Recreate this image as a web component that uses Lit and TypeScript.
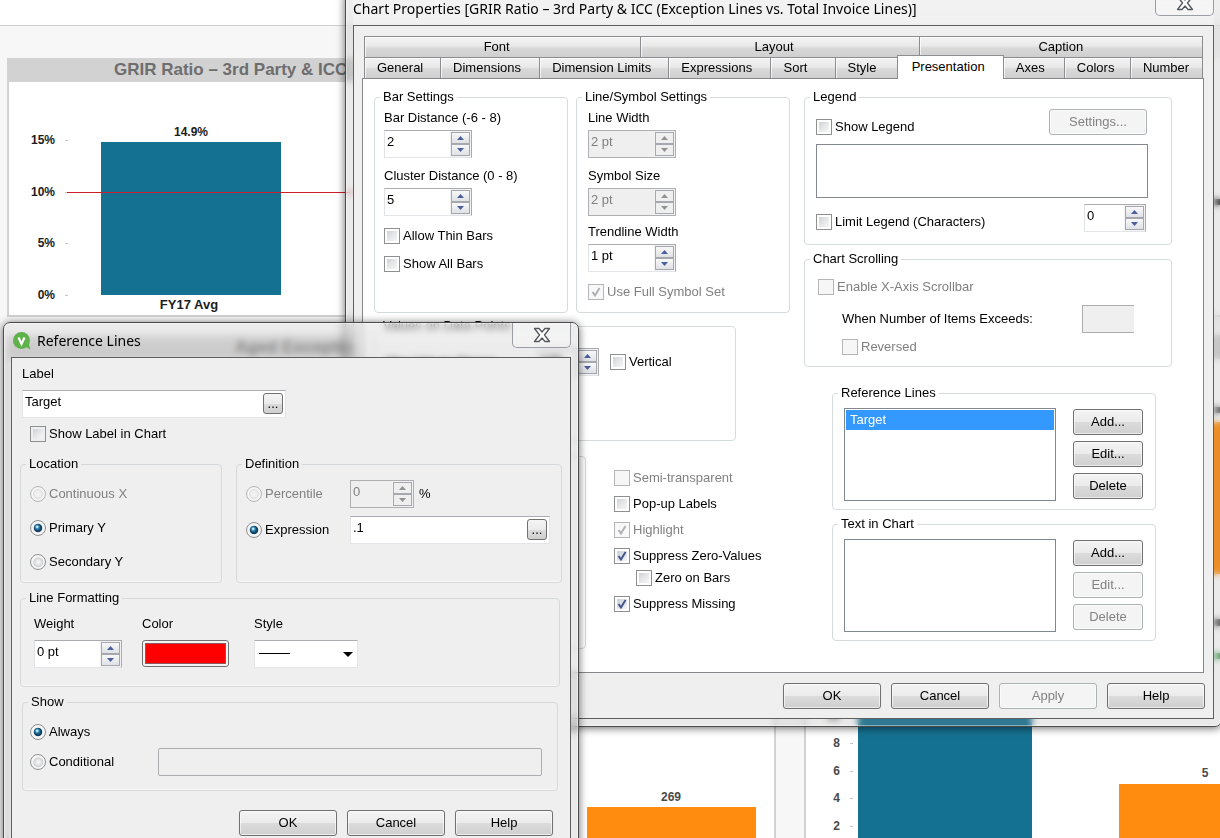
import { LitElement, html, svg, css, nothing } from "lit";
import { customElement, state } from "lit/decorators.js";
import { classMap } from "lit/directives/class-map.js";

interface CheckOptions {
  checked?: boolean;
  disabled?: boolean;
}

const TABS_TOP = ["Font", "Layout", "Caption"];
const TABS = [
  "General",
  "Dimensions",
  "Dimension Limits",
  "Expressions",
  "Sort",
  "Style",
  "Presentation",
  "Axes",
  "Colors",
  "Number",
];

const check = (text: string, o: CheckOptions = {}) => html`
  <label class=${classMap({ option: true, off: !!o.disabled })}>
    <input type="checkbox" .checked=${!!o.checked} ?disabled=${!!o.disabled} />${text}
  </label>
`;

const radio = (group: string, text: string, o: CheckOptions = {}) => html`
  <label class=${classMap({ option: true, off: !!o.disabled })}>
    <input type="radio" name=${group} .checked=${!!o.checked} ?disabled=${!!o.disabled} />${text}
  </label>
`;

const arrow = (up: boolean) => html`
  <svg width="7" height="4" viewBox="0 0 7 4" aria-hidden="true">
    <path d=${up ? "M3.5 0 7 4H0Z" : "M0 0H7L3.5 4Z"} fill="currentColor" />
  </svg>
`;

const spinner = (id: string, value: string, name: string, small = false, disabled = false) => html`
  <span class=${classMap({ spinner: true, small, off: disabled })}>
    <input type="text" id=${id} .value=${value} aria-label=${name} ?disabled=${disabled} />
    <span class="steps">
      <button type="button" aria-label="Increase" ?disabled=${disabled}>${arrow(true)}</button>
      <button type="button" aria-label="Decrease" ?disabled=${disabled}>${arrow(false)}</button>
    </span>
  </span>
`;

const push = (text: string, disabled = false) => html`
  <button type="button" class="push" ?disabled=${disabled}>${text}</button>
`;

const closeButton = () => html`
  <button type="button" class="close" aria-label="Close">
    <svg width="18" height="16" viewBox="0 0 18 16" aria-hidden="true">
      <path
        d="M1.5 1.5H6L9 5 12 1.5H16.500L11.500 8 16.500 14.500H12L9 11 6 14.500H1.500L6.500 8Z"
        fill="#fdfdfd"
        stroke="#55585e"
        stroke-width="1.300"
        stroke-linejoin="round"
      />
    </svg>
  </button>
`;

@customElement("dash-board")
export class DashBoard extends LitElement {
  static styles = css`
    :host {
      display: grid;
      grid-template-rows: 26px 1fr;
      height: 100%;
      background: #f7f7f7;
      font-family: "Liberation Sans", Arial, sans-serif;
    }
    .top {
      background: #fff;
      border-bottom: 1px solid #cfcfcf;
    }
    .cards {
      display: grid;
      grid-template-columns: 769px minmax(0, 1fr);
      grid-template-rows: 259px minmax(0, 1fr);
      gap: 18px 28px;
      padding: 32px 0 0 7px;
      min-height: 0;
    }
    .card {
      display: flex;
      flex-direction: column;
      background: #fff;
      border: 2px solid #d2d2d2;
      border-top: 0;
      overflow: hidden;
    }
    .card:nth-child(even) {
      border-right: 0;
    }
    .card:nth-child(n + 3) {
      border-bottom: 0;
    }
    h2 {
      flex: none;
      margin: 0;
      height: 24px;
      padding-left: 105px;
      background: #d2d2d2;
      color: #6e6e6e;
      font-size: 17px;
      line-height: 23px;
      white-space: nowrap;
    }
    h2.inset {
      padding-left: 226px;
    }
    svg {
      flex: 1;
      width: 100%;
      min-height: 0;
      font-size: 12px;
      font-weight: bold;
      fill: #1c1c1c;
    }
    .lower {
      fill: #4a4a4a;
    }
    .name {
      font-size: 13px;
    }
    .end {
      text-anchor: end;
    }
    .mid {
      text-anchor: middle;
    }
    .blue {
      fill: #157191;
    }
    .orange {
      fill: #ff8c0e;
    }
    .green {
      fill: #4aa05a;
    }
    .target {
      fill: #cc1f2b;
    }
    .tick {
      fill: #c4c4c4;
    }
  `;

  private axis(ticks: [string, number][], right: number) {
    return ticks.map(
      ([text, y]) => svg`
        <text class="end" x=${right} y=${y + 4}>${text}</text>
        <rect class="tick" x=${right + 10} y=${y} width="3" height="1" />`,
    );
  }

  render() {
    return html`
      <div class="top"></div>
      <div class="cards">
        <section class="card">
          <h2>GRIR Ratio – 3rd Party &amp; ICC</h2>
          <svg role="img" aria-label="GRIR ratio chart">
            ${this.axis([["15%", 58], ["10%", 110], ["5%", 161], ["0%", 213]], 46)}
            <rect class="blue" x="92" y="60" width="180" height="153" />
            <rect class="target" x="58" y="110" width="700" height="1" />
            <text class="mid" x="182" y="54">14.9%</text>
            <text class="mid name" x="180" y="227">FY17 Avg</text>
          </svg>
        </section>
        <section class="card">
          <svg aria-hidden="true">
            <rect x="407" y="141" width="9" height="6" />
          </svg>
        </section>
        <section class="card">
          <h2 class="inset">Aged Exceptions</h2>
          <svg class="lower" role="img" aria-label="Aged exceptions chart">
            <rect class="orange" x="578" y="448" width="169" height="100" />
            <text class="mid" x="662" y="442">269</text>
          </svg>
        </section>
        <section class="card">
          <h2></h2>
          <svg class="lower" role="img" aria-label="Exceptions by count">
            ${this.axis([["10", 357], ["8", 384], ["6", 412], ["4", 439], ["2", 467]], 34)}
            <rect class="blue" x="52" y="300" width="174" height="300" />
            <rect class="orange" x="313" y="425" width="180" height="200" />
            <rect class="orange" x="360" y="63" width="90" height="152" />
            <rect x="407" y="48" width="9" height="6" />
            <rect x="407" y="260" width="9" height="7" />
            <rect class="green" x="407" y="294" width="9" height="6" />
            <text class="mid" x="399" y="418">5</text>
          </svg>
        </section>
      </div>
    `;
  }
}

@customElement("app-root")
export class AppRoot extends LitElement {
  @state() private tab = "Presentation";

  static styles = css`
    :host {
      display: block;
      position: relative;
      height: 100vh;
      overflow: hidden;
      background: #fff;
      color: #000;
      font: 13px/16px "Liberation Sans", Arial, sans-serif;
    }
    * {
      box-sizing: border-box;
    }
    input,
    button,
    select {
      font: inherit;
      color: inherit;
      margin: 0;
    }
    input[type="text"] {
      display: block;
      min-width: 0;
      outline: 0;
    }

    /* Windows */
    .window {
      position: absolute;
      padding: 0 7px 7px;
      border: 1px solid #4c4c4c;
      border-radius: 7px;
      background: linear-gradient(rgba(225, 225, 225, 0.5), rgba(150, 150, 150, 0.2) 40px);
      backdrop-filter: blur(3px);
      box-shadow:
        inset 0 0 0 1px rgba(255, 255, 255, 0.4),
        0 1px 9px rgba(0, 0, 0, 0.6);
    }
    .properties {
      top: -10px;
      left: 345px;
      right: -2px;
    }
    .properties .bar {
      background: rgba(245, 245, 245, 0.6);
    }
    .reference {
      top: 322px;
      left: 3px;
      width: 576px;
    }
    .bar {
      display: flex;
      align-items: flex-start;
      height: 34px;
    }
    .bar h1 {
      flex: 1;
      margin: 0;
      padding-top: 9px;
      font: 14px/18px "Noto Sans", "Open Sans", sans-serif;
      white-space: nowrap;
    }
    .logo {
      margin: 9px 6px 0 2px;
    }
    .close {
      display: grid;
      place-items: center;
      width: 59px;
      height: 25px;
      padding: 0;
      border: 1px solid #9a9da3;
      border-top: 0;
      border-radius: 0 0 5px 5px;
      background: rgba(250, 250, 250, 0.4);
    }
    .client {
      border: 1px solid #5e5e5e;
      background: #efefef;
    }
    .properties .client {
      padding: 10px 9px 9px 8px;
    }
    .reference .client {
      padding: 8px 8px 12px;
    }

    /* Tabs */
    .tabs {
      display: grid;
      margin: 0 1px 0 2px;
    }
    .tabs.first {
      grid-template-columns: 276fr 278fr 284fr;
    }
    .tabs.second {
      grid-template-columns: 76fr 99fr 129fr 102fr 64fr 62fr 106fr 61fr 66fr 73fr;
    }
    .tab {
      min-width: 0;
      height: 21px;
      padding: 0 0 0 12px;
      border: 1px solid #8b8d90;
      border-width: 1px 1px 0 1px;
      margin-right: -1px;
      background: linear-gradient(#f3f3f3, #e9e9e9 45%, #d9d9d9 55%, #cfcfcf);
      box-shadow: inset 1px 1px 0 rgba(255, 255, 255, 0.7);
      text-align: left;
      white-space: nowrap;
    }
    .first .tab {
      padding: 0 12px 0 0;
      text-align: center;
    }
    .first .tab:last-child {
      padding-right: 0;
    }
    .tab.active {
      z-index: 1;
      height: 24px;
      margin-top: -2px;
      margin-bottom: -1px;
      padding: 0 0 2px 14px;
      background: #fff;
    }
    .tab:last-child {
      margin-right: 0;
    }

    .sheet {
      display: grid;
      grid-template-columns: minmax(0, 416fr) minmax(0, 368fr);
      column-gap: 14px;
      padding: 10px 31px 23px 11px;
      border: 1px solid #85878a;
      background: #fff;
    }

    /* Groups */
    fieldset {
      --pad: 9px;
      min-width: 0;
      margin: 0;
      padding: 0 var(--pad);
      border: 1px solid #d5dbdd;
      border-radius: 4px;
    }
    .reference fieldset {
      box-shadow: inset 0 -1px 0 #f9f9f9;
      border-color: #d5d9db;
    }
    legend {
      margin-left: calc(5px - var(--pad));
      padding: 0 3px;
    }
    .wide {
      --pad: 11px;
    }
    .row {
      display: flex;
    }
    .stack {
      display: flex;
      flex-direction: column;
      align-items: flex-start;
    }
    .between {
      justify-content: space-between;
    }
    .g4 { margin-top: 4px; }
    .g6 { margin-top: 6px; }
    .g8 { margin-top: 8px; }
    .g10 { margin-top: 10px; }
    .g12 { margin-top: 12px; }
    .g14 { margin-top: 14px; }

    .pair {
      display: grid;
      grid-template-columns: 194fr 214fr;
      gap: 8px;
    }
    .pair fieldset {
      height: 224px;
    }
    .caption {
      display: block;
      margin: 5px 0 4px;
    }
    .stack .spinner + .caption {
      margin-top: 10px;
    }
    .stack .spinner + .caption.near {
      margin-top: 8px;
    }
    .values {
      width: 362px;
      height: 123px;
      margin-top: 5px;
      padding-right: 0;
    }
    .values .row {
      align-items: center;
      margin-top: 14px;
    }
    .values .caption {
      width: 153px;
      margin: 0;
      padding-left: 2px;
    }
    .values .option {
      margin-left: 11px;
    }
    .lower {
      gap: 28px;
      margin-top: 15px;
    }
    .blank {
      width: 212px;
      height: 193px;
    }
    .toggles {
      padding-top: 14px;
      gap: 10px;
    }
    .nested {
      margin: -4px 0 0 22px;
    }

    /* Check boxes and radio buttons */
    .option {
      display: flex;
      align-items: center;
      gap: 3px;
      height: 16px;
      white-space: nowrap;
    }
    .option input {
      appearance: none;
      flex: none;
      width: 16px;
      height: 16px;
      border: 1px solid #8e8f8f;
      background: linear-gradient(135deg, #cfd1d4, #e6e7e9 50%, #f6f6f6) content-box #f6f6f6;
      padding: 2px;
    }
    .option input[type="radio"] {
      border-radius: 50%;
      background: radial-gradient(circle at 52% 52%, #f3f3f3 12%, #d0d2d4 44%, #f6f6f6 52%);
    }
    .option input[type="radio"]:checked {
      background:
        radial-gradient(circle at 44% 42%, #c4ecf8 5%, rgba(63, 156, 203, 0.8) 16%, transparent 30%),
        radial-gradient(circle, #14567d 20%, #123a58 38%, #f4f4f4 47%);
    }
    .option input[type="checkbox"]:checked {
      background:
        url("data:image/svg+xml,%3Csvg xmlns='http://www.w3.org/2000/svg' viewBox='0 0 14 14'%3E%3Cpath d='M3.500 7l2.500 3.500L10.500 3' fill='none' stroke='%23465790' stroke-width='2'/%3E%3C/svg%3E")
          border-box center / 14px no-repeat,
        linear-gradient(135deg, #c9d0dc, #f4f4f4) content-box #f6f6f6;
    }
    .option input:disabled {
      border-color: #b4b6b7;
      background: #f6f6f6;
    }
    .option input[type="checkbox"]:checked:disabled {
      background: url("data:image/svg+xml,%3Csvg xmlns='http://www.w3.org/2000/svg' viewBox='0 0 14 14'%3E%3Cpath d='M3.500 7l2.500 3.500L10.500 3' fill='none' stroke='%23b0b0b5' stroke-width='2'/%3E%3C/svg%3E")
        border-box center / 14px no-repeat #f8f8f8;
    }
    .option input[type="radio"]:disabled {
      background: radial-gradient(circle, #f0f0f0 30%, #dddddd 46%, #f4f4f4 52%);
    }
    .off {
      color: #808080;
    }

    /* Spinners and text boxes */
    .spinner {
      display: flex;
      width: 88px;
      height: 28px;
      border: 1px solid #a9abae;
      border-left-color: #e0e3e5;
      border-bottom-color: #e3e5e8;
      background: #fff;
    }
    .spinner.small {
      width: 62px;
    }
    .spinner input {
      flex: 1;
      border: 0;
      padding: 0 0 5px 2px;
      background: transparent;
    }
    .spinner.off {
      border-color: #adafb1;
      background: #efefef;
    }
    .steps {
      display: grid;
      grid-template-rows: 1fr 1fr;
      width: 21px;
      padding: 1px;
      background: #f2f2f2;
    }
    .steps button {
      display: grid;
      place-items: center;
      padding: 0;
      border: 1px solid #a5a8ac;
      background: linear-gradient(#f8f8f8, #dfe1e6);
      color: #4a5f9e;
    }
    .off .steps button {
      background: #efefef;
      color: #929292;
    }
    .field {
      display: flex;
      height: 28px;
      padding: 2px 2px 3px;
      border: 1px solid #e3e5e8;
      border-top-color: #abadb3;
      background: #fff;
    }
    .field input {
      flex: 1;
      border: 0;
      padding: 0 0 4px;
      background: transparent;
    }
    .dots {
      width: 20px;
      padding: 0;
      border: 1px solid #707070;
      border-radius: 3px;
      background: linear-gradient(#f4f4f4, #ebebeb 50%, #dcdcdc 50%, #d0d0d0);
    }
    .count {
      width: 52px;
      height: 28px;
      border: 1px solid #abadb1;
      border-right: 0;
      background: #efefef;
    }

    /* Push buttons and lists */
    .push {
      width: 98px;
      height: 26px;
      padding: 0;
      border: 1px solid #707070;
      border-radius: 3px;
      background: linear-gradient(#f4f4f4, #ebebeb 50%, #dcdcdc 50%, #cfcfcf);
      box-shadow: inset 0 0 0 1px rgba(255, 255, 255, 0.6);
    }
    .push:disabled {
      border-color: #adb2b5;
      background: #f4f4f4;
      color: #838383;
    }
    .side {
      gap: 6px;
      padding-top: 1px;
    }
    .side .push {
      width: 70px;
    }
    .list {
      height: 54px;
      padding: 1px;
      border: 1px solid #828790;
      background: #fff;
    }
    .list.tall {
      width: 212px;
      height: 93px;
    }
    .item {
      height: 20px;
      padding-left: 4px;
      background: #3399ff;
      color: #fff;
      line-height: 20px;
    }
    .legend .row:first-of-type,
    .legend .row:last-of-type {
      align-items: flex-end;
    }
    .legend .list {
      margin: 9px 12px 6px 0;
    }
    .legend {
      height: 156px;
    }
    .legend .push {
      margin-right: 13px;
    }
    .legend .row:last-of-type {
      padding-right: 14px;
    }
    .legend .row:last-of-type .option {
      margin-bottom: 2px;
    }
    .scrolling {
      --pad: 13px;
      height: 116px;
      margin-top: 6px;
    }
    .scrolling .row {
      align-items: center;
      padding: 0 24px;
    }
    .deep {
      margin-left: 24px;
    }
    .lines {
      margin: 18px 16px 0 28px;
      padding-bottom: 8px;
    }
    .lines + .lines {
      margin-top: 6px;
    }
    .lines .row {
      gap: 17px;
      margin-top: 7px;
    }
    .actions {
      justify-content: flex-end;
      gap: 10px;
      padding-top: 10px;
    }
    .properties .actions .push:last-child {
      margin-right: -1px;
    }

    /* Reference line window */
    .intro {
      margin-left: 2px;
    }
    .intro .field {
      width: 264px;
    }
    .intro .option {
      margin: 8px 0 0 8px;
    }
    .place {
      display: grid;
      grid-template-columns: 202px minmax(0, 326px);
      gap: 14px;
      margin-top: 14px;
    }
    .place fieldset {
      height: 127px;
    }
    .location {
      gap: 18px;
      padding-top: 14px;
    }
    .definition {
      display: grid;
      grid-template-columns: 104px minmax(0, 200px);
      row-gap: 8px;
      align-items: center;
      padding-top: 8px;
    }
    .definition .row {
      align-items: center;
      gap: 5px;
    }
    .definition .spinner {
      width: 64px;
    }
    .format {
      --pad: 13px;
      width: 540px;
      margin-top: 7px;
      padding-bottom: 18px;
    }
    .format .row {
      gap: 20px;
      padding-top: 10px;
    }
    .format .caption {
      margin: 0 0 8px;
    }
    .swatch {
      display: block;
      width: 87px;
      height: 27px;
      margin-right: 5px;
      padding: 2px;
      border: 1px solid #707070;
      border-radius: 3px;
      background: #f4f4f4;
    }
    .swatch span {
      display: block;
      height: 100%;
      border: 1px solid #8a5a5a;
      background: #f00;
    }
    .dropdown {
      display: block;
      position: relative;
      width: 104px;
      height: 28px;
    }
    .dropdown select {
      appearance: none;
      width: 100%;
      height: 100%;
      border: 1px solid #e3e5e8;
      border-top-color: #abadb3;
      border-radius: 0;
      background: #fff;
    }
    .dropdown svg {
      position: absolute;
      inset: 0;
      pointer-events: none;
    }
    .show {
      --pad: 7px;
      width: 536px;
      margin: 7px 0 0 2px;
      padding: 0 15px 14px 7px;
    }
    .show .row {
      align-items: center;
    }
    .show .row .option {
      width: 128px;
    }
    .condition {
      flex: 1;
      height: 28px;
      border: 1px solid #abadb1;
      border-radius: 2px;
      background: #efefef;
    }
    .reference .actions {
      padding: 19px 9px 0 0;
    }
  `;

  private tabButton(name: string) {
    const active = name === this.tab;
    return html`
      <button
        type="button"
        role="tab"
        aria-selected=${active ? "true" : "false"}
        class=${classMap({ tab: true, active })}
        @click=${() => (this.tab = name)}
      >${name}</button>
    `;
  }

  private lineList(title: string, items: string[]) {
    const empty = items.length === 0;
    return html`
      <fieldset class="lines wide">
        <legend>${title}</legend>
        <div class="row">
          <div class="list tall" role="listbox" aria-label=${title}>
            ${empty
              ? nothing
              : items.map((i) => html`<div class="item" role="option" aria-selected="true">${i}</div>`)}
          </div>
          <div class="stack side">
            ${push("Add...")} ${push("Edit...", empty)} ${push("Delete", empty)}
          </div>
        </div>
      </fieldset>
    `;
  }

  private propertiesWindow() {
    return html`
      <section class="window properties">
        <header class="bar">
          <h1>Chart Properties [GRIR Ratio – 3rd Party &amp; ICC (Exception Lines vs. Total Invoice Lines)]</h1>
          ${closeButton()}
        </header>
        <div class="client">
          <div class="tabs first" role="tablist">${TABS_TOP.map((t) => this.tabButton(t))}</div>
          <div class="tabs second" role="tablist">${TABS.map((t) => this.tabButton(t))}</div>
          <div class="sheet">
            <div>
              <div class="pair">
                <fieldset>
                  <legend>Bar Settings</legend>
                  <div class="stack">
                    <label class="caption" for="bar">Bar Distance (-6 - 8)</label>
                    ${spinner("bar", "2", "Bar Distance")}
                    <label class="caption" for="cluster">Cluster Distance (0 - 8)</label>
                    ${spinner("cluster", "5", "Cluster Distance")}
                    <div class="g12">${check("Allow Thin Bars")}</div>
                    <div class="g12">${check("Show All Bars")}</div>
                  </div>
                </fieldset>
                <fieldset class="wide">
                  <legend>Line/Symbol Settings</legend>
                  <div class="stack">
                    <label class="caption" for="line">Line Width</label>
                    ${spinner("line", "2 pt", "Line Width", false, true)}
                    <label class="caption" for="symbol">Symbol Size</label>
                    ${spinner("symbol", "2 pt", "Symbol Size", false, true)}
                    <label class="caption near" for="trend">Trendline Width</label>
                    ${spinner("trend", "1 pt", "Trendline Width")}
                    <div class="g12">${check("Use Full Symbol Set", { checked: true, disabled: true })}</div>
                  </div>
                </fieldset>
              </div>
              <fieldset class="values">
                <legend>Values on Data Points</legend>
                <div class="row">
                  <label class="caption" for="max">Max Values Shown</label>
                  ${spinner("max", "100", "Max Values Shown", true)} ${check("Vertical")}
                </div>
              </fieldset>
              <div class="row lower">
                <fieldset class="blank"></fieldset>
                <div class="stack toggles">
                  ${check("Semi-transparent", { disabled: true })}
                  ${check("Pop-up Labels")}
                  ${check("Highlight", { checked: true, disabled: true })}
                  ${check("Suppress Zero-Values", { checked: true })}
                  <div class="nested">${check("Zero on Bars")}</div>
                  ${check("Suppress Missing", { checked: true })}
                </div>
              </div>
            </div>
            <div>
              <fieldset class="legend wide">
                <legend>Legend</legend>
                <div class="row between g4">${check("Show Legend")} ${push("Settings...", true)}</div>
                <div class="list" role="listbox" aria-label="Legend"></div>
                <div class="row between">
                  ${check("Limit Legend (Characters)")} ${spinner("limit", "0", "Limit Legend", true)}
                </div>
              </fieldset>
              <fieldset class="scrolling">
                <legend>Chart Scrolling</legend>
                <div class="stack g12">${check("Enable X-Axis Scrollbar", { disabled: true })}</div>
                <div class="row between g10">
                  <label for="items">When Number of Items Exceeds:</label>
                  <input class="count" id="items" type="text" disabled />
                </div>
                <div class="stack deep g6">${check("Reversed", { disabled: true })}</div>
              </fieldset>
              ${this.lineList("Reference Lines", ["Target"])} ${this.lineList("Text in Chart", [])}
            </div>
          </div>
          <footer class="row actions">
            ${push("OK")} ${push("Cancel")} ${push("Apply", true)} ${push("Help")}
          </footer>
        </div>
      </section>
    `;
  }

  private referenceWindow() {
    return html`
      <section class="window reference">
        <header class="bar">
          <svg class="logo" width="18" height="18" viewBox="0 0 18 18" aria-hidden="true">
            <circle cx="8.500" cy="8.500" r="8.500" fill="#5fb24a" />
            <path d="M12 14.500 17.500 17.500 15.500 11Z" fill="#5fb24a" />
            <path d="M5.500 5.500 8.500 12 11.500 5.500" fill="none" stroke="#fff" stroke-width="2.200" />
          </svg>
          <h1>Reference Lines</h1>
          ${closeButton()}
        </header>
        <div class="client">
          <div class="intro">
            <label for="label">Label</label>
            <div class="field g8">
              <input id="label" type="text" value="Target" />
              <button type="button" class="dots" aria-label="Edit label">...</button>
            </div>
            ${check("Show Label in Chart")}
          </div>
          <div class="place">
            <fieldset>
              <legend>Location</legend>
              <div class="stack location">
                ${radio("location", "Continuous X", { disabled: true })}
                ${radio("location", "Primary Y", { checked: true })}
                ${radio("location", "Secondary Y")}
              </div>
            </fieldset>
            <fieldset>
              <legend>Definition</legend>
              <div class="definition">
                ${radio("definition", "Percentile", { disabled: true })}
                <div class="row">${spinner("percent", "0", "Percentile", true, true)} %</div>
                ${radio("definition", "Expression", { checked: true })}
                <div class="field">
                  <input type="text" aria-label="Expression" value=".1" />
                  <button type="button" class="dots" aria-label="Edit expression">...</button>
                </div>
              </div>
            </fieldset>
          </div>
          <fieldset class="format">
            <legend>Line Formatting</legend>
            <div class="row">
              <div>
                <label class="caption" for="weight">Weight</label>
                ${spinner("weight", "0 pt", "Weight")}
              </div>
              <div>
                <label class="caption" for="color">Color</label>
                <button id="color" type="button" class="swatch" aria-label="Red"><span></span></button>
              </div>
              <div>
                <label class="caption" for="style">Style</label>
                <span class="dropdown">
                  <select id="style"><option aria-label="Solid"></option></select>
                  <svg width="104" height="28" viewBox="0 0 104 28" aria-hidden="true">
                    <path d="M5 13.500H36" stroke="#000" />
                    <path d="M89 12H99L94 17Z" />
                  </svg>
                </span>
              </div>
            </div>
          </fieldset>
          <fieldset class="show">
            <legend>Show</legend>
            <div class="stack g14">${radio("show", "Always", { checked: true })}</div>
            <div class="row g8">
              ${radio("show", "Conditional")}
              <input class="condition" type="text" aria-label="Condition" disabled />
            </div>
          </fieldset>
          <footer class="row actions">${push("OK")} ${push("Cancel")} ${push("Help")}</footer>
        </div>
      </section>
    `;
  }

  render() {
    return html`
      <dash-board></dash-board>
      ${this.propertiesWindow()} ${this.referenceWindow()}
    `;
  }
}
